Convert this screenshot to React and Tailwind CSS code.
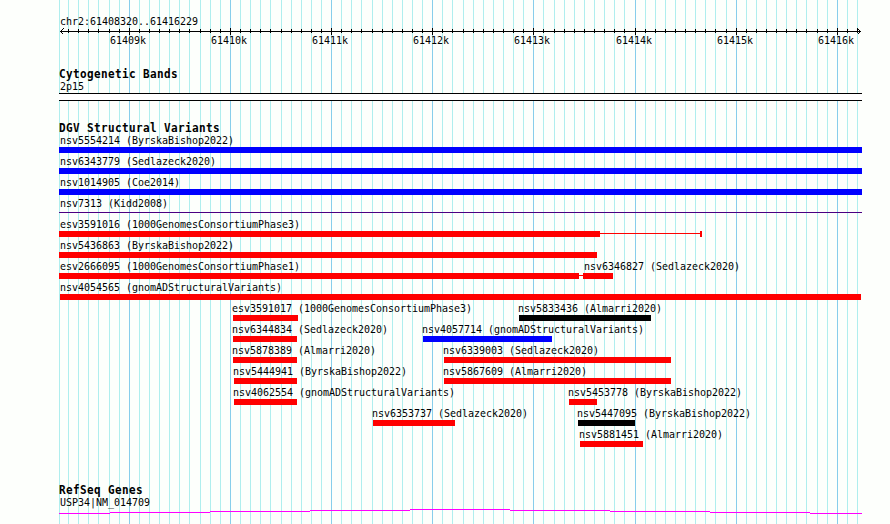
const START = 61408320;
const END = 61416229;
const SPAN = 800;
const LEFT = 60;

const toX = (bp) => Math.round(LEFT + ((bp - START) * SPAN) / (END - START));

const marks = [];
for (let bp = 61408400; bp < END; bp += 100) {
  marks.push({ bp, x: toX(bp), major: bp % 1000 === 0 });
}

const RED = "bg-[#ff0000]";
const BLUE = "bg-[#0000ff]";
const BLACK = "bg-black";

// each lane holds features with the pixel range of their bar
const lanes = [
  [{ name: "nsv5554214 (ByrskaBishop2022)", from: 59, to: 862, color: BLUE }],
  [{ name: "nsv6343779 (Sedlazeck2020)", from: 59, to: 862, color: BLUE }],
  [{ name: "nsv1014905 (Coe2014)", from: 59, to: 862, color: BLUE }],
  [{ name: "nsv7313 (Kidd2008)", from: 59, to: 862, color: "bg-[#4b0082]", thin: true }],
  [{ name: "esv3591016 (1000GenomesConsortiumPhase3)", from: 59, to: 600, color: RED, tail: 702, cap: true }],
  [{ name: "nsv5436863 (ByrskaBishop2022)", from: 59, to: 597, color: RED }],
  [
    { name: "esv2666095 (1000GenomesConsortiumPhase1)", from: 59, to: 579, color: RED, tail: 583 },
    { name: "nsv6346827 (Sedlazeck2020)", from: 583, to: 613, color: RED, label: 584 },
  ],
  [{ name: "nsv4054565 (gnomADStructuralVariants)", from: 60, to: 861, color: RED }],
  [
    { name: "esv3591017 (1000GenomesConsortiumPhase3)", from: 233, to: 298, color: RED, label: 232 },
    { name: "nsv5833436 (Almarri2020)", from: 519, to: 651, color: BLACK, label: 518 },
  ],
  [
    { name: "nsv6344834 (Sedlazeck2020)", from: 233, to: 297, color: RED, label: 232 },
    { name: "nsv4057714 (gnomADStructuralVariants)", from: 423, to: 552, color: BLUE, label: 422 },
  ],
  [
    { name: "nsv5878389 (Almarri2020)", from: 233, to: 297, color: RED, label: 232 },
    { name: "nsv6339003 (Sedlazeck2020)", from: 444, to: 671, color: RED, label: 443 },
  ],
  [
    { name: "nsv5444941 (ByrskaBishop2022)", from: 234, to: 297, color: RED, label: 233 },
    { name: "nsv5867609 (Almarri2020)", from: 444, to: 671, color: RED, label: 443 },
  ],
  [
    { name: "nsv4062554 (gnomADStructuralVariants)", from: 234, to: 297, color: RED, label: 233 },
    { name: "nsv5453778 (ByrskaBishop2022)", from: 569, to: 597, color: RED, label: 568 },
  ],
  [
    { name: "nsv6353737 (Sedlazeck2020)", from: 373, to: 455, color: RED, label: 372 },
    { name: "nsv5447095 (ByrskaBishop2022)", from: 578, to: 635, color: BLACK, label: 577 },
  ],
  [{ name: "nsv5881451 (Almarri2020)", from: 580, to: 643, color: RED, label: 579 }],
];

const geneSteps = [
  [59, 110, 4],
  [110, 210, 3],
  [210, 310, 2],
  [310, 410, 1],
  [410, 510, 0],
  [510, 610, 1],
  [610, 710, 2],
  [710, 810, 3],
  [810, 862, 4],
];

const Grid = () => (
  <svg className="absolute inset-0" width="890" height="524" shapeRendering="crispEdges">
    <rect x="59" y="0" width="1" height="524" fill="#afeeee" />
    {marks.map((m) => (
      <rect key={m.bp} x={m.x} y="0" width="1" height="524" fill={m.major ? "#87ceeb" : "#afeeee"} />
    ))}
  </svg>
);

const Label = ({ children }) => (
  <span className="block h-3 origin-top scale-y-[1.1] whitespace-pre text-[10px] leading-3 tracking-[-0.02px]">
    {children}
  </span>
);

const Title = ({ children }) => (
  <h2 className="h-3 scale-y-[1.1] whitespace-pre text-[11px] font-bold leading-[13px] tracking-[0.378px]">
    {children}
  </h2>
);

const Ruler = () => (
  <div>
    <div className="pl-[60px]">
      <Label>chr2:61408320..61416229</Label>
    </div>
    <svg className="block" width="890" height="7" shapeRendering="crispEdges" overflow="visible">
      <rect x="60" y="4" width="801" height="1" />
      {marks.map((m) => (
        <rect key={m.bp} x={m.x} y={m.major ? 1 : 2} width="1" height={m.major ? 7 : 4} />
      ))}
      <path d="M63.5 1.5L60.5 4.5L63.5 7.5M857.5 1.5L860.5 4.5L857.5 7.5" fill="none" stroke="black" />
    </svg>
    <div className="relative h-3">
      {marks
        .filter((m) => m.major)
        .map((m) => (
          <div key={m.bp} className="absolute top-0" style={{ left: m.x - 19 }}>
            <Label>{m.bp / 1000}k</Label>
          </div>
        ))}
    </div>
  </div>
);

const Feature = ({ name, from, to, color, label = 60, tail, cap, thin }) => (
  <>
    <div className="absolute top-0" style={{ left: label }}>
      <Label>{name}</Label>
    </div>
    <div
      className={`absolute ${color} ${thin ? "top-[15px] h-px" : "top-[13px] h-1.5"}`}
      style={{ left: from, width: to - from }}
    />
    {tail && <div className={`absolute top-[15px] h-px ${color}`} style={{ left: to, width: tail - to }} />}
    {cap && <div className={`absolute top-[13px] h-1.5 w-0.5 ${color}`} style={{ left: tail - 2 }} />}
  </>
);

export default function App() {
  return (
    <div className="relative h-[524px] w-[890px] overflow-hidden bg-[#fdfffc] font-['DejaVu_Sans_Mono',monospace] text-black">
      <Grid />
      <div className="relative flex flex-col pt-[15px]">
        <Ruler />

        <section className="mt-[22px]">
          <div className="pl-[59px]">
            <Title>Cytogenetic Bands</Title>
          </div>
          <div className="pl-[60px]">
            <Label>2p15</Label>
          </div>
          <div className="mt-px ml-[59px] h-2 w-[803px] border-y border-black bg-white" />
        </section>

        <section className="mt-[21px]">
          <div className="pl-[59px]">
            <Title>DGV Structural Variants</Title>
          </div>
          {lanes.map((features, i) => (
            <div key={i} className="relative h-[21px]">
              {features.map((f) => (
                <Feature key={f.name} {...f} />
              ))}
            </div>
          ))}
        </section>

        <section className="mt-[35px]">
          <div className="pl-[59px]">
            <Title>RefSeq Genes</Title>
          </div>
          <div className="pl-[60px]">
            <Label>USP34|NM_014709</Label>
          </div>
          <svg className="mt-px block" width="890" height="14" shapeRendering="crispEdges">
            {geneSteps.map(([a, b, y]) => (
              <rect key={a} x={a} y={y} width={b - a} height="1" fill="#ff00ff" />
            ))}
          </svg>
        </section>
      </div>
    </div>
  );
}
